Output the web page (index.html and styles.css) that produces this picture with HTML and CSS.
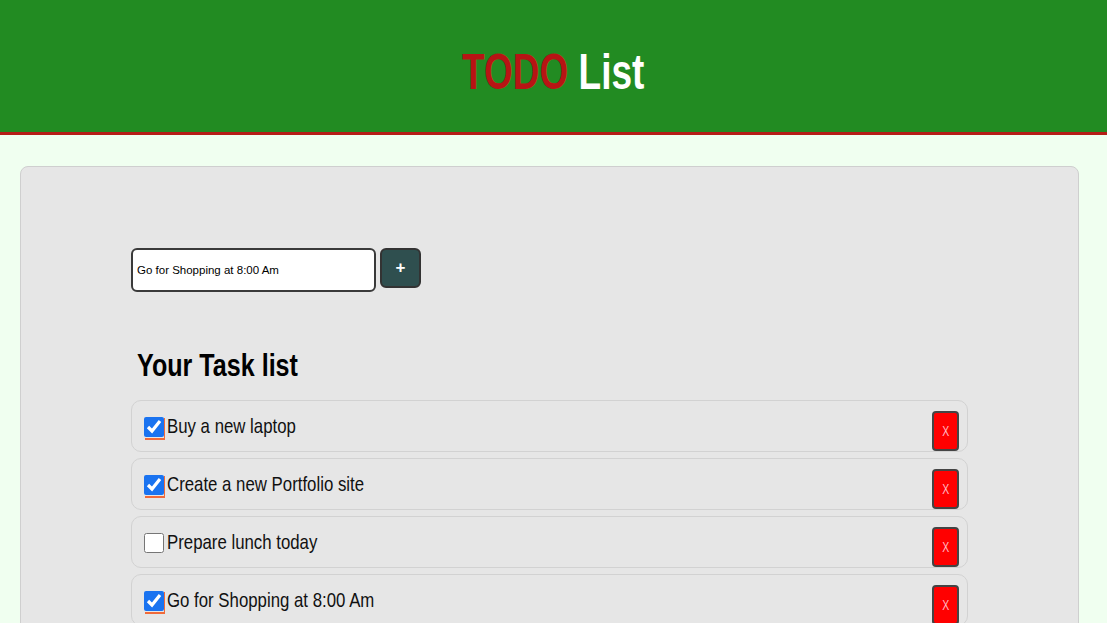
FILE: index.html
```html
<!DOCTYPE html>
<html>
<head>
<meta charset="utf-8">
<link rel="stylesheet" href="styles.css">
</head>
<body>
<header class="topbar">
  <h1 class="title"><span class="title-todo">TODO</span> <span class="title-list">List</span></h1>
</header>
<main class="card">
  <div class="add-row">
    <input class="task-input" type="text" value="Go for Shopping at 8:00 Am">
    <button class="add-btn">+</button>
  </div>
  <h2 class="list-title">Your Task list</h2>
  <ul class="tasks">
    <li class="task"><label class="task-label"><input class="check" type="checkbox" checked><span class="txt">Buy a new laptop</span></label><button class="del-btn"><span class="x">X</span></button></li>
    <li class="task"><label class="task-label"><input class="check" type="checkbox" checked><span class="txt">Create a new Portfolio site</span></label><button class="del-btn"><span class="x">X</span></button></li>
    <li class="task"><label class="task-label"><input class="check" type="checkbox"><span class="txt">Prepare lunch today</span></label><button class="del-btn"><span class="x">X</span></button></li>
    <li class="task"><label class="task-label"><input class="check" type="checkbox" checked><span class="txt">Go for Shopping at 8:00 Am</span></label><button class="del-btn"><span class="x">X</span></button></li>
  </ul>
</main>
</body>
</html>
```
FILE: styles.css
```css
* { box-sizing: border-box; }
html, body { margin: 0; padding: 0; }
body {
  background: #f0fff0;
  font-family: "Liberation Sans", Arial, sans-serif;
  height: 623px;
  overflow: hidden;
}
.topbar {
  background: #228b22;
  height: 135px;
  border-bottom: 3px solid #b51d17;
  display: flex;
  justify-content: center;
  align-items: flex-start;
}
.title {
  margin: 46px 0 0 0;
  font-size: 50px;
  font-weight: bold;
  line-height: 52px;
  transform: scaleX(0.74);
  transform-origin: center;
}
.title-todo { color: #b81414; }
.title-list { color: #ffffff; }
.card {
  margin: 31px 28px 0 20px;
  background: #e6e6e6;
  border: 1px solid #cfcfcf;
  border-radius: 8px;
  padding: 81px 110px 40px 110px;
  min-height: 600px;
}
.add-row {
  display: flex;
  align-items: flex-start;
  gap: 4px;
}
.task-input {
  width: 245px;
  height: 44px;
  border: 2px solid #3a3a3a;
  border-radius: 6px;
  background: #fff;
  font-family: inherit;
  font-size: 11.5px;
  padding: 0 4px;
  color: #000;
  outline: none;
}
.add-btn {
  width: 41px;
  height: 40px;
  background: #2f4f4f;
  color: #fff;
  border: 2px solid #333;
  border-radius: 6px;
  font-family: inherit;
  font-size: 17px;
  font-weight: bold;
  padding: 0;
}
.list-title {
  margin: 56px 0 16px 6px;
  font-size: 31px;
  font-weight: bold;
  line-height: 36px;
  color: #000;
  transform: scaleX(0.81);
  transform-origin: left center;
}
.tasks {
  list-style: none;
  margin: 0;
  padding: 0;
  width: 837px;
  display: flex;
  flex-direction: column;
  gap: 6px;
}
.task {
  height: 52px;
  border: 1px solid #d2d2d2;
  border-radius: 10px;
  display: flex;
  align-items: center;
  justify-content: space-between;
  padding: 0 8px 0 12px;
}
.task-label {
  display: flex;
  align-items: center;
  font-size: 21px;
  color: #111;
}
.txt {
  display: inline-block;
  transform: scaleX(0.8);
  transform-origin: left center;
}
.check {
  width: 20px;
  height: 22px;
  margin: 2px 3px 0 0;
  accent-color: #1a73f0;
}
.check:checked {
  box-shadow: 1px 2px 0 #f06a3a;
  border-radius: 3px;
}
.del-btn {
  width: 27px;
  height: 40px;
  background: #ff0000;
  color: #ffb6c1;
  border: 2px solid #444;
  border-radius: 4px;
  font-family: inherit;
  font-size: 14px;
  padding: 0;
  align-self: flex-start;
  margin-top: 10px;
}
.x {
  display: inline-block;
  transform: scaleX(0.75);
}
```
